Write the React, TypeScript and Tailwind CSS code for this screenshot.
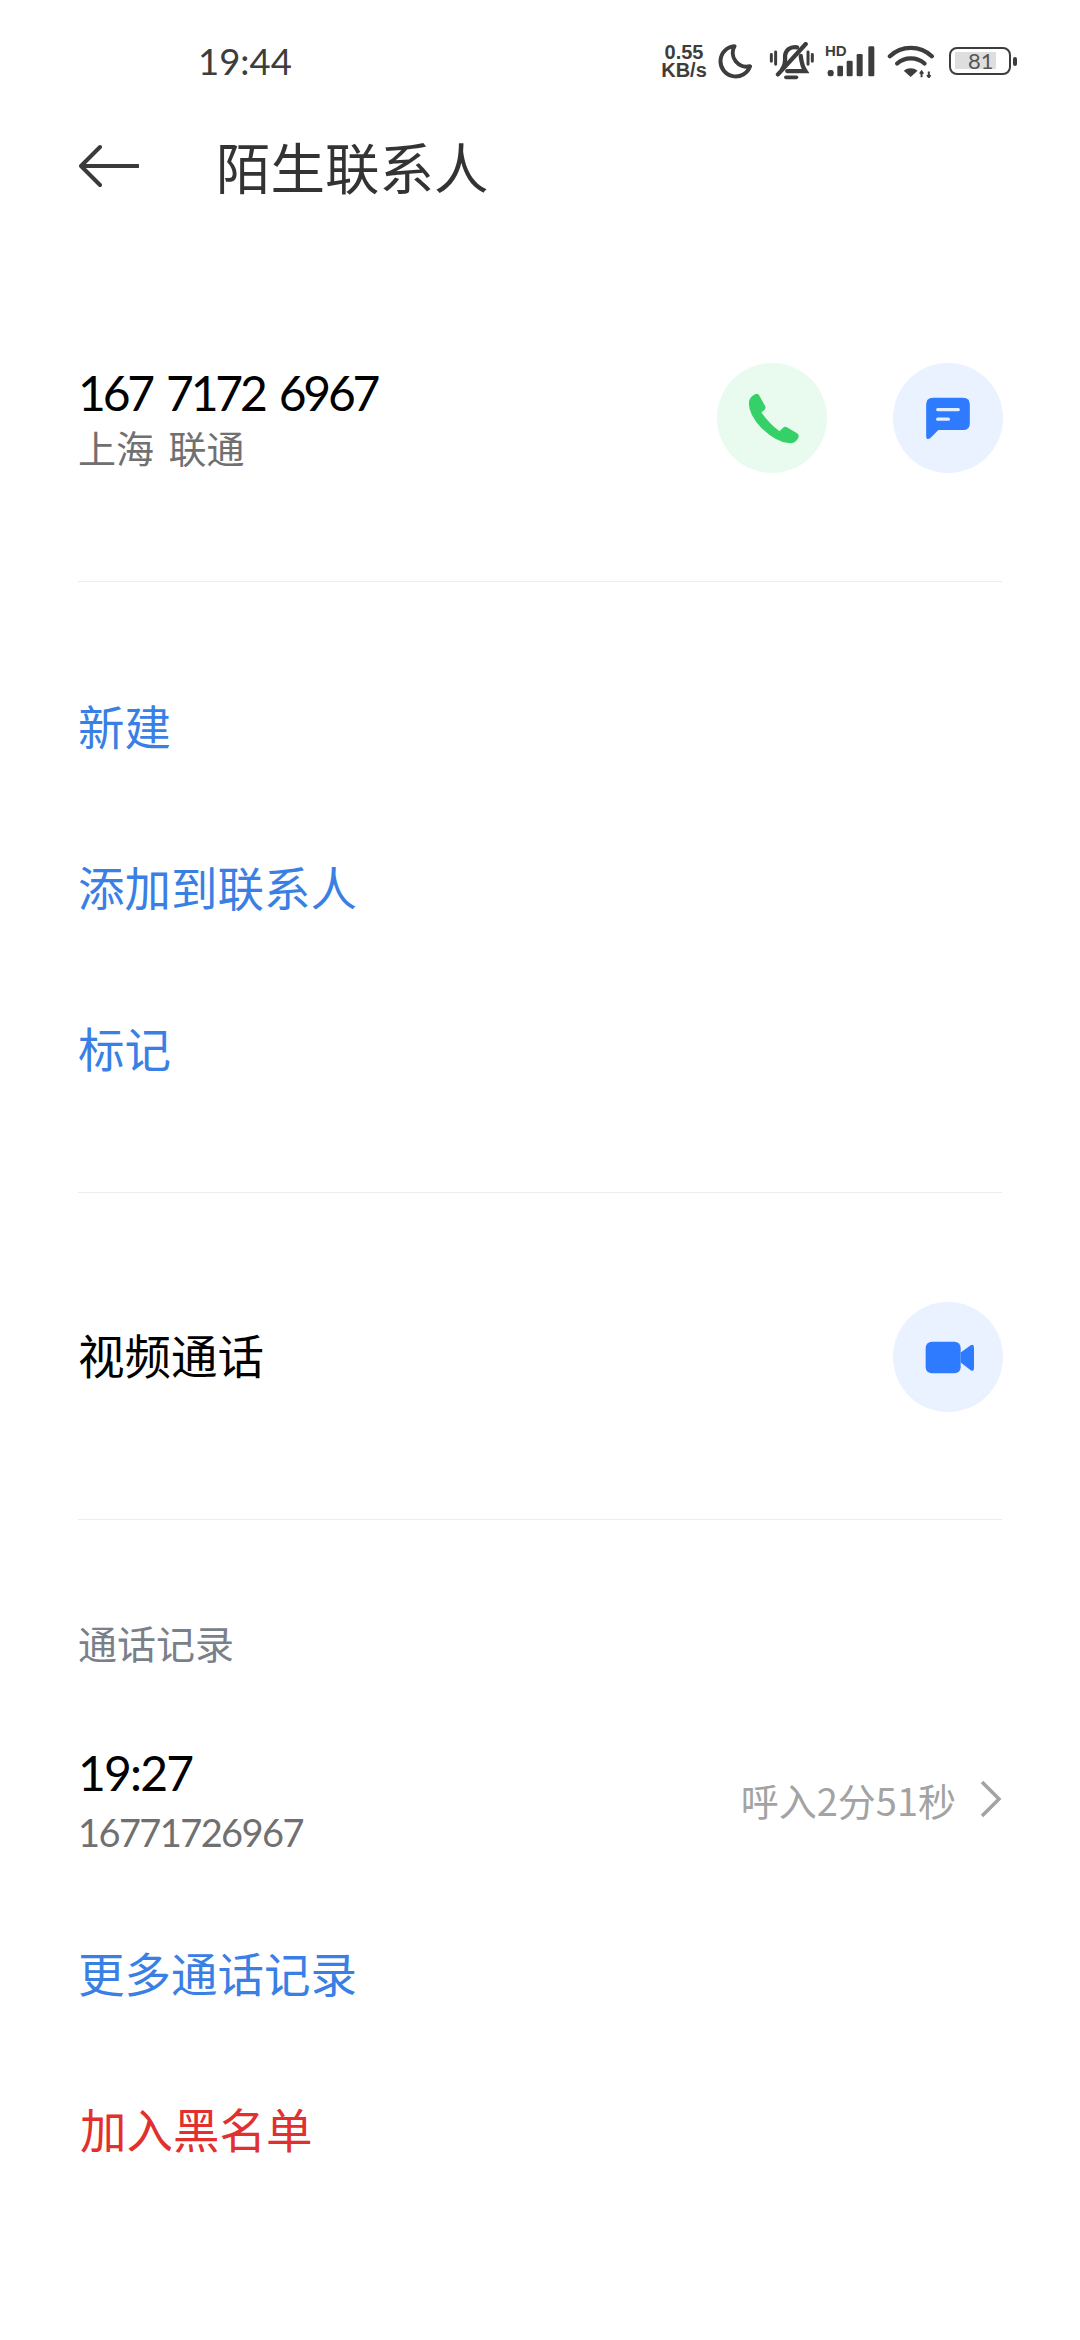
import React from "react";

const cjk = "font-['Noto_Sans_CJK_SC','Noto_Sans',sans-serif]";
const digits = "font-['Lato','Noto_Sans_CJK_SC',sans-serif]";

function Moon() {
  return (
    <svg viewBox="235 72 106 108" className="w-[35px] h-[36px]">
      <path d="M285 81 A46 46 0 1 0 332 142 A42 42 0 0 1 285 81 Z" fill="none" stroke="#3d3d3d" strokeWidth="12" strokeLinejoin="round" />
    </svg>
  );
}

function MutedBell() {
  return (
    <svg viewBox="385 70 136 118" className="w-[45px] h-[39px]">
      <g fill="none" stroke="#3d3d3d" strokeLinecap="round">
        <path d="M392 108V128M405 100V137M516 108V128M503 100V137" strokeWidth="9" />
        <path d="M425 152C438 135 432 120 434 108C438 92 452 84 470 86" strokeWidth="13" />
        <path d="M481 112C483 130 484 142 495 158H440" strokeWidth="13" />
        <path d="M412 168L496 76" strokeWidth="13" />
        <path d="M436 177H468" strokeWidth="11" />
      </g>
    </svg>
  );
}

function Signal() {
  return (
    <div className="relative w-[50px] h-[32px]">
      <span className="absolute left-0 top-[-1px] text-[15px] leading-[14px] font-bold text-[#3d3d3d] font-['Liberation_Sans',sans-serif]">HD</span>
      <svg viewBox="555 78 150 96" className="w-[50px] h-[32px]">
        <g fill="#3d3d3d">
          <rect x="563" y="153" width="18" height="19" rx="7" />
          <rect x="592" y="140" width="17" height="32" rx="4" />
          <rect x="620" y="125" width="18" height="47" rx="4" />
          <rect x="650" y="105" width="18" height="67" rx="4" />
          <rect x="685" y="82" width="18" height="90" rx="4" />
        </g>
      </svg>
    </div>
  );
}

function Wifi() {
  return (
    <svg viewBox="742 78 144 100" className="w-[48px] h-[33px]">
      <g fill="none" stroke="#3d3d3d" strokeWidth="13" strokeLinecap="round">
        <path d="M750 112C785 78 842 78 877 112" />
        <path d="M772 134C795 113 832 113 855 134" />
      </g>
      <path d="M792 156C804 146 822 146 834 156L813 175Z" fill="#3d3d3d" />
      <path d="M846 176V160M841 165L846 158L851 165M868 158V174M863 169L868 176L873 169" fill="none" stroke="#3d3d3d" strokeWidth="6" />
    </svg>
  );
}

function Battery() {
  return (
    <div className="flex items-center gap-[2px]">
      <div className="w-[62px] h-[28px] rounded-[8px] border-[2.5px] border-[#3d3d3d] p-[3px] pl-[4px]">
        <div className="w-[41px] h-[17px] bg-[#dedede] pl-[13px] text-[22px] leading-[17px] text-[#555] font-['Lato',sans-serif]">81</div>
      </div>
      <div className="w-[4px] h-[9px] rounded-full bg-[#3d3d3d]" />
    </div>
  );
}

function StatusBar() {
  return (
    <div className="h-[122px] flex items-center justify-between pl-[198px] pr-[63px]">
      <span className="text-[36.5px] text-[#3d3d3d] font-['Lato',sans-serif]">19:44</span>
      <div className="flex items-center">
        <div className="w-[50px] text-[20px] leading-[18px] font-bold text-[#3d3d3d] text-center font-['Liberation_Sans',sans-serif]">
          <div>0.55</div>
          <div>KB/s</div>
        </div>
        <div className="ml-[9px]"><Moon /></div>
        <div className="ml-[16px]"><MutedBell /></div>
        <div className="ml-[11px]"><Signal /></div>
        <div className="ml-[12px]"><Wifi /></div>
        <div className="ml-[14px]"><Battery /></div>
      </div>
    </div>
  );
}

function CircleButton({ bg, children }: { bg: string; children: React.ReactNode }) {
  return <div className={`w-[110px] h-[110px] rounded-full flex items-center justify-center ${bg}`}>{children}</div>;
}

function PhoneIcon() {
  return (
    <svg viewBox="205 155 155 155" className="ml-[3px] w-[52px] h-[52px]">
      <path d="M226 162Q233 158 238 165L256 197Q259 203 254 208L245 216Q268 250 299 272L309 262Q314 257 321 260L350 277Q359 282 355 291Q347 308 330 308Q290 306 245 262Q205 220 208 185Q210 170 226 162Z" fill="#35d068" />
    </svg>
  );
}

function MessageIcon() {
  return (
    <svg viewBox="735 170 138 130" className="w-[46px] h-[43px]">
      <path d="M758 172H850Q870 172 870 192V250Q870 270 850 270H775L750 295Q738 302 738 288V192Q738 172 758 172Z" fill="#2f7bff" />
      <rect x="768" y="203" width="72" height="10" rx="5" fill="#e3eeff" />
      <rect x="768" y="232" width="42" height="10" rx="5" fill="#e3eeff" />
    </svg>
  );
}

function VideoIcon() {
  return (
    <svg viewBox="196 181 150 98" className="ml-[3px] w-[50px] h-[33px]">
      <rect x="198" y="183" width="105" height="94" rx="18" fill="#2f7bff" />
      <path d="M303 215L333 193Q343 188 343 200V260Q343 274 333 268L303 245Z" fill="#2f7bff" />
    </svg>
  );
}

function Divider() {
  return <div className="h-[1px] bg-[#ececec]" />;
}

function LinkRow({ text }: { text: string }) {
  return <div className="h-[161px] flex items-center text-[46.5px] text-[#3a80e4]">{text}</div>;
}

export default function App() {
  return (
    <div className={`w-[1080px] h-[2340px] bg-white overflow-hidden ${cjk}`}>
      <StatusBar />

      <div className="h-[88px] flex items-center pl-[79px]">
        <svg viewBox="0 0 60 44" className="w-[60px] h-[44px]">
          <path d="M59 22H2M21 3L2 22L21 41" fill="none" stroke="#3a3a3a" strokeWidth="4" strokeLinecap="round" strokeLinejoin="round" />
        </svg>
        <span className="ml-[77px] text-[54.5px] leading-[88px] text-[#333]">陌生联系人</span>
      </div>

      <div className="px-[78px] mt-[153px]">
        <div className="h-[110px] flex items-center justify-between">
          <div>
            <div className={`text-[48px] leading-[58px] tracking-[-3.2px] [word-spacing:5px] text-black ${digits}`}>167 7172 6967</div>
            <div className="text-[38px] leading-[50px] [word-spacing:6px] text-[#707070]">上海 联通</div>
          </div>
          <div className="flex gap-[66px] mr-[-1px]">
            <CircleButton bg="bg-[#e9faef]"><PhoneIcon /></CircleButton>
            <CircleButton bg="bg-[#e9f2fe]"><MessageIcon /></CircleButton>
          </div>
        </div>

        <div className="mt-[108px]"><Divider /></div>

        <div className="mt-[62px]">
          <LinkRow text="新建" />
          <LinkRow text="添加到联系人" />
          <LinkRow text="标记" />
        </div>

        <div className="mt-[65px]"><Divider /></div>

        <div className="mt-[109px] h-[110px] flex items-center justify-between">
          <span className="mb-[6px] text-[46.5px] text-black">视频通话</span>
          <div className="mr-[-1px]">
            <CircleButton bg="bg-[#e9f2fe]"><VideoIcon /></CircleButton>
          </div>
        </div>

        <div className="mt-[107px]"><Divider /></div>

        <div className="mt-[97px] h-[50px] flex items-center text-[39px] text-[#7a7f8a]">通话记录</div>

        <div className="mt-[76px] flex items-center justify-between">
          <div>
            <div className={`text-[48px] leading-[60px] tracking-[-1.8px] text-black ${digits}`}>19:27</div>
            <div className={`text-[38px] leading-[58px] tracking-[-1.6px] text-[#707070] ${digits}`}>16771726967</div>
          </div>
          <div className="flex items-center mb-[6px]">
            <span className="text-[38px] text-[#a3a3a3]">呼入2分51秒</span>
            <svg viewBox="0 0 24 40" className="ml-[22px] w-[24px] h-[40px]">
              <path d="M4 3L21 20L4 37" fill="none" stroke="#a3a3a3" strokeWidth="3.5" />
            </svg>
          </div>
        </div>

        <div className="mt-[76px] h-[70px] flex items-center text-[46.5px] text-[#3a80e4]">更多通话记录</div>
        <div className="mt-[86px] h-[70px] flex items-center pl-[2px] text-[46.5px] text-[#e2302e]">加入黑名单</div>
      </div>
    </div>
  );
}
